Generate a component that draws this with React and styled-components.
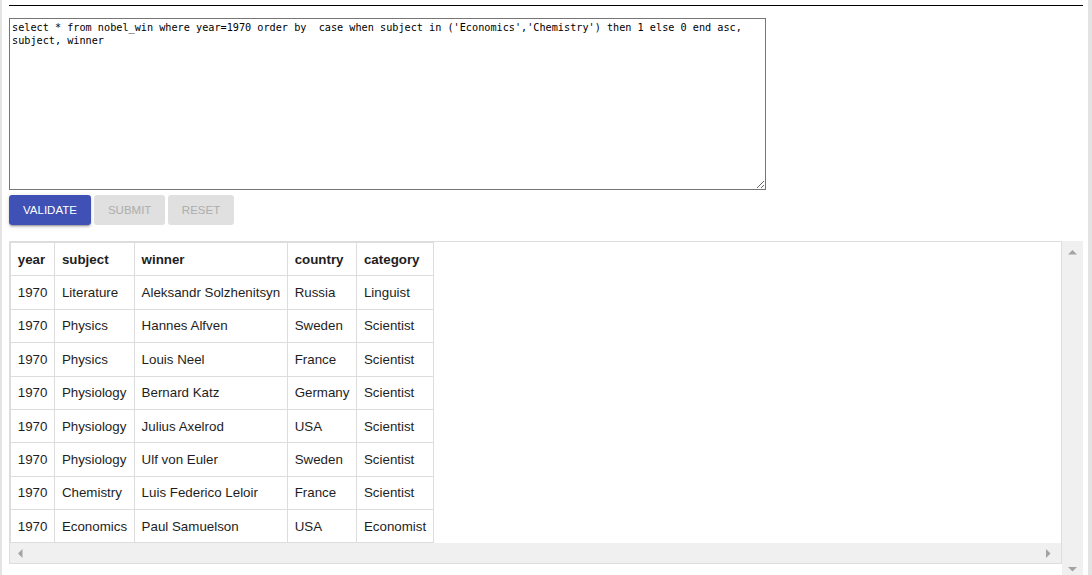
import React from "react";
import styled, { createGlobalStyle } from "styled-components";

const Global = createGlobalStyle`
  html, body { margin: 0; padding: 0; background: #fff; height: 100%; overflow: hidden; }
  #root { height: 100%; }
`;

const Frame = styled.div`
  box-sizing: border-box;
  width: 1092px;
  height: 100%;
  border-left: 2px solid #e3e3e3;
  border-right: 4px solid #e3e3e3;
  padding: 5px 5px 0 7px;
  font-family: "Liberation Sans", Arial, sans-serif;
  color: #222;
`;

const Divider = styled.div`
  height: 1px;
  background: #000;
`;

const QueryBox = styled.textarea`
  display: block;
  box-sizing: border-box;
  margin: 12px 0 0;
  width: 757px;
  height: 172px;
  padding: 2px;
  border: 1px solid #767676;
  border-radius: 0;
  font-family: "DejaVu Sans Mono", monospace;
  font-size: 10.2px;
  line-height: 13.3px;
  color: #000;
  background: #fff;
  outline: none;
`;

const ButtonRow = styled.div`
  display: flex;
  gap: 3.5px;
  margin-top: 5px;
`;

const Button = styled.button`
  box-sizing: border-box;
  height: 30px;
  padding: 0 ${(p) => (p.$primary ? "14px" : "13.5px")};
  border: none;
  border-radius: 3px;
  font-family: "Liberation Sans", Arial, sans-serif;
  font-size: 11.5px;
  font-weight: 500;
  text-transform: uppercase;
  cursor: ${(p) => (p.$primary ? "pointer" : "default")};
  background: ${(p) => (p.$primary ? "#3f51b5" : "#e0e0e0")};
  color: ${(p) => (p.$primary ? "#fff" : "#adadad")};
  box-shadow: ${(p) =>
    p.$primary
      ? "0px 3px 1px -2px rgba(0,0,0,0.2), 0px 2px 2px 0px rgba(0,0,0,0.14), 0px 1px 5px 0px rgba(0,0,0,0.12)"
      : "none"};
`;

const ResultArea = styled.div`
  display: flex;
  margin-top: 16px;
  height: 339px;
`;

const ResultPane = styled.div`
  flex: 1;
  align-self: flex-start;
  border: 1px solid #ddd;
  min-width: 0;
`;

const TableViewport = styled.div`
  overflow: hidden;
`;

const Table = styled.table`
  border-collapse: collapse;
  font-size: 13.33px;
  line-height: 15px;
  color: #1e1e1e;
`;

const Th = styled.th`
  border: 1px solid #ddd;
  padding: 8.7px 6.75px;
  text-align: left;
  font-weight: bold;
  white-space: nowrap;
`;

const Td = styled.td`
  border: 1px solid #ddd;
  padding: 8.7px 6.75px;
  white-space: nowrap;
`;

const HScrollbar = styled.div`
  display: flex;
  align-items: center;
  justify-content: space-between;
  height: 20px;
  background: #f0f0f0;
  padding: 0 10px 0 8px;
`;

const VScrollbar = styled.div`
  display: flex;
  flex-direction: column;
  align-items: center;
  justify-content: space-between;
  width: 21px;
  background: #f0f0f0;
  padding: 9px 0 8px;
  box-sizing: border-box;
`;

const Arrow = ({ dir }) => {
  const pts = {
    up: "0,4.5 4.5,0 9,4.5",
    down: "0,0 9,0 4.5,4.5",
    left: "4.5,0 4.5,9 0,4.5",
    right: "0,0 0,9 4.5,4.5",
  }[dir];
  const vertical = dir === "up" || dir === "down";
  return (
    <svg
      width={vertical ? 9 : 5}
      height={vertical ? 5 : 9}
      viewBox={vertical ? "0 0 9 5" : "0 0 5 9"}
    >
      <polygon points={pts} fill="#a3a3a3" />
    </svg>
  );
};

const columns = ["year", "subject", "winner", "country", "category"];
const rows = [
  ["1970", "Literature", "Aleksandr Solzhenitsyn", "Russia", "Linguist"],
  ["1970", "Physics", "Hannes Alfven", "Sweden", "Scientist"],
  ["1970", "Physics", "Louis Neel", "France", "Scientist"],
  ["1970", "Physiology", "Bernard Katz", "Germany", "Scientist"],
  ["1970", "Physiology", "Julius Axelrod", "USA", "Scientist"],
  ["1970", "Physiology", "Ulf von Euler", "Sweden", "Scientist"],
  ["1970", "Chemistry", "Luis Federico Leloir", "France", "Scientist"],
  ["1970", "Economics", "Paul Samuelson", "USA", "Economist"],
];

const query =
  "select * from nobel_win where year=1970 order by  case when subject in ('Economics','Chemistry') then 1 else 0 end asc, subject, winner";

export default function App() {
  return (
    <>
      <Global />
      <Frame>
        <Divider />
        <QueryBox defaultValue={query} spellCheck={false} />
        <ButtonRow>
          <Button $primary>Validate</Button>
          <Button disabled>Submit</Button>
          <Button disabled>Reset</Button>
        </ButtonRow>
        <ResultArea>
          <ResultPane>
            <TableViewport>
              <Table>
                <thead>
                  <tr>
                    {columns.map((c) => (
                      <Th key={c}>{c}</Th>
                    ))}
                  </tr>
                </thead>
                <tbody>
                  {rows.map((r, i) => (
                    <tr key={i}>
                      {r.map((v, j) => (
                        <Td key={j}>{v}</Td>
                      ))}
                    </tr>
                  ))}
                </tbody>
              </Table>
            </TableViewport>
            <HScrollbar>
              <Arrow dir="left" />
              <Arrow dir="right" />
            </HScrollbar>
          </ResultPane>
          <VScrollbar>
            <Arrow dir="up" />
            <Arrow dir="down" />
          </VScrollbar>
        </ResultArea>
      </Frame>
    </>
  );
}
